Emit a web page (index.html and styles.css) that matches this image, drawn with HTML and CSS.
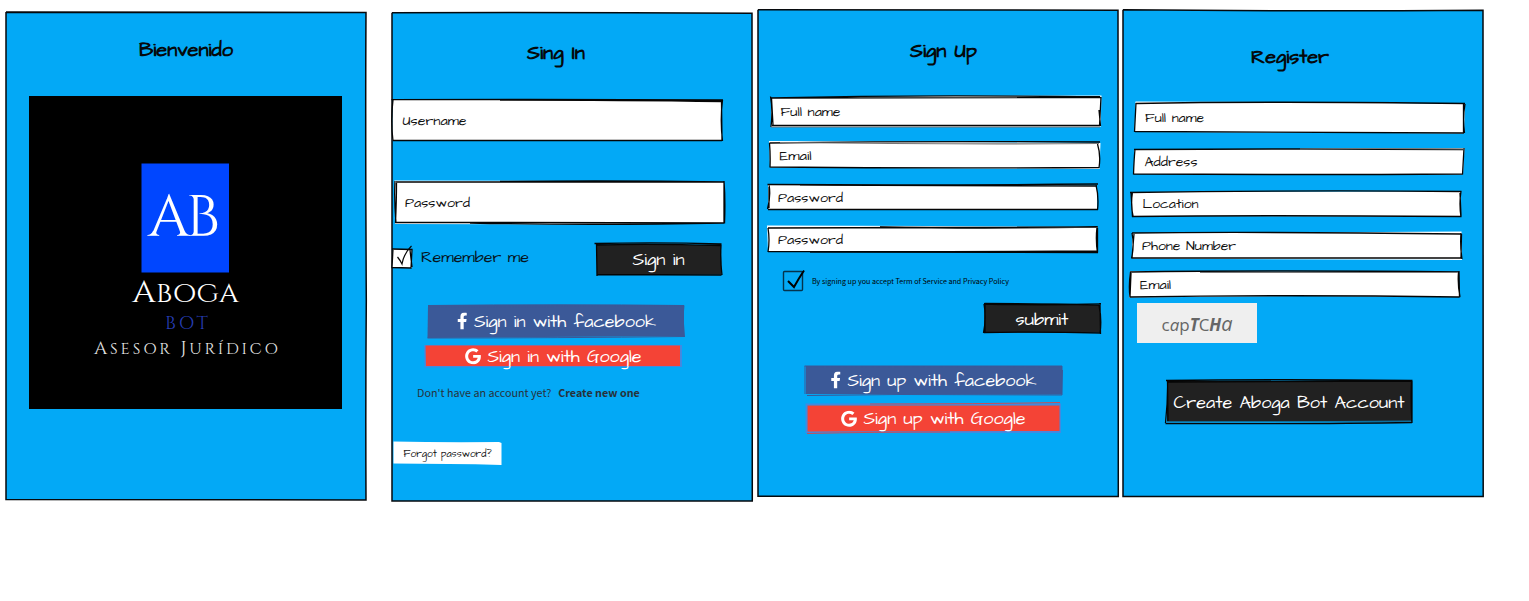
FILE: index.html
```html
<!DOCTYPE html>
<html lang="es">
<head>
<meta charset="utf-8">
<title>Aboga Bot</title>
<link rel="stylesheet" href="styles.css">
</head>
<body>
<svg class="defs" width="0" height="0" aria-hidden="true">
  <symbol id="facebook" viewBox="0 0 320 512"><path d="M279 288l14-93h-89v-60c0-25 12-50 52-50h41V6S260 0 225 0c-73 0-121 44-121 125v70H23v93h81v224h100V288z"/></symbol>
  <symbol id="google" viewBox="0 0 488 512"><path d="M488 261.8C488 403.3 391.1 504 248 504 110.8 504 0 393.2 0 256S110.8 8 248 8c66.8 0 123 24.500 166.3 64.900l-67.500 64.900C258.500 52.600 94.300 116.600 94.300 256c0 86.500 69.100 156.600 153.700 156.600 98.200 0 135-70.400 140.800-106.900H248v-85.300h236.100c2.300 12.700 3.900 24.900 3.900 41.400z"/></symbol>
</svg>
<main class="board">

  <section class="screen welcome">
    <svg class="frame" viewBox="5 11 362 490" width="362" height="490">
      <path class="sky" d="M6 12.500L366 12.500L366 500L6 500Z"/>
      <path class="edge" d="M6 12Q120 11.500 366 12.500M6 12.500Q180 13.200 366 12.500Q365.300 120 366.300 300Q365.500 400 366 500Q180 500.500 6 499.500Q6.600 200 6 12"/>
    </svg>
    <div class="content">
      <svg class="title" viewBox="134 38 104 24" width="104" height="24"><text x="139" y="55.500" textLength="94" lengthAdjust="spacingAndGlyphs">Bienvenido</text></svg>
      <svg class="logo" viewBox="29 96 313 313" width="313" height="313">
        <rect class="black" x="29" y="96" width="313" height="313"/>
        <rect class="mark" x="141.500" y="163.500" width="87.500" height="109"/>
        <text class="mono" x="148" y="236" textLength="68" lengthAdjust="spacingAndGlyphs">AB</text>
        <text class="brand" x="132" y="302" textLength="107" lengthAdjust="spacingAndGlyphs">A<tspan class="brand-small">BOGA</tspan></text>
        <text class="bot" x="165" y="329" textLength="43">BOT</text>
        <text class="tagline" x="94" y="354" textLength="184">A<tspan class="tagline-small">SESOR</tspan> J<tspan class="tagline-small">URÍDICO</tspan></text>
      </svg>
    </div>
  </section>

  <section class="screen sign-in">
    <svg class="frame" viewBox="391 12 362 490" width="362" height="490">
      <path class="sky" d="M392 13L752 13L752 501L392 501Z"/>
      <path class="edge" d="M392 12.800Q560 12.200 752 13.300Q751.400 300 752.300 501Q550 500.500 392 501Q392.600 240 392 12.800"/>
    </svg>
    <div class="content">
      <svg class="title" viewBox="520 40 72 30" width="72" height="30"><text x="527" y="59" textLength="58" lengthAdjust="spacingAndGlyphs">Sing In</text></svg>
      <svg class="username" viewBox="391 98 334 46" width="334" height="46">
        <path class="paper" d="M393 100H722V140.500H392.500Z"/>
        <path class="ink" d="M391.500 99.700Q560 99 723 100M500 100Q620 100 722 101.500M722.500 100Q720 120 722.500 141M721.500 102L722 141M393 140.500Q520 141 722 140.500M393 100Q390.500 120 393 141"/>
        <text class="label" x="402.500" y="124.500" textLength="64" lengthAdjust="spacingAndGlyphs">Username</text>
      </svg>
      <svg class="password" viewBox="393 179 334 46" width="334" height="46">
        <path class="paper" d="M394.500 180.500L560 181L724 182V223L560 224.500L395 224Z"/>
        <path class="ink" d="M396 182Q550 181.500 724.500 182M500 181.500Q610 180 724 182M724 181Q725.500 200 724.500 223.500M724 182V223M395 222.500Q560 222 724 223M470 223Q590 225.500 724 223M395 181Q394 200 396 223M396.500 183Q396.500 200 395.500 223"/>
        <text class="label" x="405" y="206.500" textLength="65" lengthAdjust="spacingAndGlyphs">Password</text>
      </svg>
      <div class="remember-row">
        <svg viewBox="391 242 144 36" width="144" height="36">
          <path class="paper" d="M393 249H412V268H392Z"/>
          <path class="ink" d="M392 249L412 249.500L411 268L392 267.500L393 249M410 250L412 267"/>
          <path class="ink thin" d="M397.500 257Q400 260 402 264Q404 253 411.500 246"/>
          <text class="remember" x="421" y="261.500" textLength="108" lengthAdjust="spacingAndGlyphs">Remember me</text>
        </svg>
        <svg viewBox="594 242 130 36" width="130" height="36">
          <path class="dark" d="M597 245L721 245L721.500 274.500L597 274.500Z"/>
          <path class="ink" d="M594.500 243.500Q660 242 721.500 244M596 245Q650 243.500 721 245.500Q720 260 722 275M596.500 244L597 276M597 274.500L721.500 275"/>
          <text class="button-text" x="632.500" y="265" textLength="52" lengthAdjust="spacingAndGlyphs">Sign in</text>
        </svg>
      </div>
      <svg class="facebook-in" viewBox="426 303 262 38" width="262" height="38">
        <path class="blue" d="M428 305H684V336L427.500 338Z"/>
        <path class="blue-line" d="M428 305.500Q560 304 684 305.500L683 317L684.500 337M430 307L684 306M427.500 338Q560 338 684 336.500"/>
        <use class="icon" href="#facebook" x="457" y="312.500" width="10.500" height="17"/>
        <text class="button-text" x="474" y="326.500" textLength="182" lengthAdjust="spacingAndGlyphs">Sign in with facebook</text>
      </svg>
      <svg class="google-in" viewBox="424 343 260 26" width="260" height="26">
        <path class="halo" d="M425 346H681V366L425.500 366.500Z"/>
        <path class="red" d="M425.500 345.500H680V366H426Z"/>
        <use class="icon" href="#google" x="465" y="348" width="16" height="16.500"/>
        <text class="button-text" x="487.500" y="361.500" textLength="154" lengthAdjust="spacingAndGlyphs">Sign in with Google</text>
      </svg>
      <p class="account"><span>Don't have an account yet?</span><b>Create new one</b></p>
      <svg class="forgot" viewBox="392 440 112 28" width="112" height="28">
        <path class="paper" d="M393.500 441.500Q440 442.500 499 442L501.500 443V465Q450 463.500 393.500 463.500Z"/>
        <text class="forgot-text" x="403.500" y="457" textLength="88" lengthAdjust="spacingAndGlyphs">Forgot password?</text>
      </svg>
    </div>
  </section>

  <section class="screen sign-up">
    <svg class="frame" viewBox="757 9 362 489" width="362" height="489">
      <path class="sky" d="M758 10H1118V496.500H758Z"/>
      <path class="edge" d="M758 9.800Q930 10.600 1118 10.200Q1117.500 260 1118.300 496.500Q940 497 758 496.300Q759 240 758 9.800"/>
    </svg>
    <div class="content">
      <svg class="title" viewBox="905 38 80 28" width="80" height="28"><text x="910" y="56.500" textLength="67" lengthAdjust="spacingAndGlyphs">Sign Up</text></svg>
      <svg class="name" viewBox="768 94 336 36" width="336" height="36">
        <path class="paper" d="M771 98L930 96L1101.500 95.500L1100.500 127L771 127Z"/>
        <path class="ink" d="M771 98Q920 94.500 1100 97M772 98Q930 97.500 1100.500 97.500M770.500 96.500Q773 110 771 127M771.500 98L773 125M1101 97L1099.500 126M1099 110L1100.500 126M772 125.500Q930 125.500 1100 125.500"/><path class="soft" d="M771 127Q900 127 1100 127"/>
        <text class="label" x="780.500" y="115.500" textLength="60" lengthAdjust="spacingAndGlyphs">Full name</text>
      </svg>
      <svg class="email" viewBox="768 140 336 30" width="336" height="30">
        <path class="paper" d="M769 141L900 141.500L1100.500 143L1099.500 169L770 167.500Z"/>
        <path class="ink" d="M769.500 143Q920 141 1100 142M769.500 143Q770.500 155 770 167.500M1097.500 144Q1101 155 1099 168M770 167Q930 168.500 1099 167.500"/><path class="soft" d="M780 142.500Q950 144.500 1099 143.500"/>
        <text class="label" x="779.500" y="159.500" textLength="32" lengthAdjust="spacingAndGlyphs">Email</text>
      </svg>
      <svg class="pass" viewBox="766 182 336 30" width="336" height="30">
        <path class="paper" d="M768 184.500L1097 185.500V209.500L768.500 209Z"/>
        <path class="ink" d="M767.500 184.500Q930 185.500 1098 184M800 185L1097 186M769 184Q771 197 767.500 209M769 187L769 208M1096 185Q1099 197 1097.500 210M768 209.500Q850 209 1098 209.500"/>
        <text class="label" x="778" y="201.500" textLength="65" lengthAdjust="spacingAndGlyphs">Password</text>
      </svg>
      <svg class="pass" viewBox="766 224 336 30" width="336" height="30">
        <path class="paper" d="M767 225.500L930 226L1098 227V252L768 252Z"/>
        <path class="ink" d="M768 228Q930 227 1098 227M880 227Q980 229 1097 227M768 228Q770 240 768 252M1097 227Q1095.500 240 1097.500 253M1097.500 228V252M768 251.500Q930 252 1098 251M810 252L1098 252.500"/>
        <text class="label" x="778" y="243.500" textLength="65" lengthAdjust="spacingAndGlyphs">Password</text>
      </svg>
      <div class="terms">
        <svg viewBox="782 268 24 26" width="24" height="26">
          <rect class="box" x="783.500" y="271.500" width="19" height="19" rx="1"/>
          <path class="tick" d="M788 281L794 287Q799 278 804 270.500"/>
        </svg>
        <span>By signing up you accept Term of Service and Privacy Policy</span>
      </div>
      <svg class="submit" viewBox="981 302 122 34" width="122" height="34">
        <path class="dark" d="M984.500 305L1100 305V332.500H984Z"/>
        <path class="ink" d="M984 304Q1040 305.500 1101 304M984.500 303.500Q1030 303.500 1100 305M984 304Q986.500 318 983.500 333M985 305V333M1100 303L1100.500 334M1099 305Q1102 320 1100 333M984 332.500Q1040 331.500 1101 333"/>
        <text class="button-text" x="1015.500" y="324.500" textLength="53" lengthAdjust="spacingAndGlyphs">submit</text>
      </svg>
      <svg class="facebook-up" viewBox="803 364 262 34" width="262" height="34">
        <path class="blue" d="M806 366H1062V394.500L806 394Z"/>
        <path class="blue-line" d="M804.500 366H1062V395M805 366V394M807 395.500L900 394.500L1062 395M1062.500 370L1061.500 394M808 367.500L1060 367"/>
        <use class="icon" href="#facebook" x="830.500" y="371.500" width="10.500" height="17"/>
        <text class="button-text" x="847.500" y="385.500" textLength="189" lengthAdjust="spacingAndGlyphs">Sign up with facebook</text>
      </svg>
      <svg class="google-up" viewBox="804 401 262 34" width="262" height="34">
        <path class="halo" d="M806.500 404.500H1060V432H806.500Z"/>
        <path class="red" d="M807.500 405.500H1059.500V431L807.500 431.500Z"/>
        <path class="red-line" d="M870 404Q980 404 1060 402.500M807 433.500Q870 432 950 432"/>
        <use class="icon" href="#google" x="841" y="410.500" width="16" height="16.500"/>
        <text class="button-text" x="863.500" y="423.500" textLength="162" lengthAdjust="spacingAndGlyphs">Sign up with Google</text>
      </svg>
    </div>
  </section>

  <section class="screen register">
    <svg class="frame" viewBox="1122 9 362 489" width="362" height="489">
      <path class="sky" d="M1123 10H1483V496.500H1123Z"/>
      <path class="edge" d="M1123 9.800Q1290 11.500 1483 10.200Q1482.300 260 1483.200 496.500Q1300 496 1123 496.500Q1123.800 240 1123 9.800"/>
    </svg>
    <div class="content">
      <svg class="title" viewBox="1245 44 90 30" width="90" height="30"><text x="1251" y="62.500" textLength="78" lengthAdjust="spacingAndGlyphs">Register</text></svg>
      <svg class="name" viewBox="1132 100 336 36" width="336" height="36">
        <path class="paper" d="M1135.500 101.500L1300 102L1465 104L1464 133.500L1300 132.500L1134.500 132Z"/>
        <path class="ink" d="M1136 103.500Q1270 101 1465 103.500M1136 103L1134.500 132M1465 104Q1462.500 118 1464.500 133M1463.500 104V133M1135 131.500Q1300 132 1464 133"/>
        <text class="label" x="1145" y="121.500" textLength="59" lengthAdjust="spacingAndGlyphs">Full name</text>
      </svg>
      <svg class="address" viewBox="1132 146 336 32" width="336" height="32">
        <path class="paper" d="M1134 149.500L1300 149L1464.500 148L1463 174.500L1134 174Z"/>
        <path class="ink" d="M1134 149.500Q1300 148.500 1463 149.500M1135 149Q1134 160 1133.500 174.500M1464 148L1462.500 174.500M1133.500 174Q1300 175 1463 174"/><path class="soft" d="M1300 149Q1380 148 1463 149"/>
        <text class="label" x="1144.500" y="165.500" textLength="53" lengthAdjust="spacingAndGlyphs">Address</text>
      </svg>
      <svg class="location" viewBox="1129 188 336 32" width="336" height="32">
        <path class="paper" d="M1132 192L1461 191.500L1460.500 216.500L1132 216Z"/>
        <path class="ink" d="M1130 192.500Q1300 190 1461.500 191.500M1131 192L1132.500 217M1132.500 192Q1130.500 205 1133 216M1461 191Q1459 204 1461 217M1460 193L1461 216M1132 216.500Q1250 215 1461.500 216.500"/>
        <text class="label" x="1142.500" y="207.500" textLength="56" lengthAdjust="spacingAndGlyphs">Location</text>
      </svg>
      <svg class="location" viewBox="1129 230 336 32" width="336" height="32">
        <path class="paper" d="M1132 233L1300 232.500L1461.500 231.500L1462 260L1132 258.500Z"/>
        <path class="ink" d="M1132 233Q1250 231.500 1461 234M1132 233Q1134.500 246 1131.500 258.500M1134 234L1132 258M1461 233Q1460 246 1462 259M1461.500 234L1461 258M1132 258Q1300 258.500 1462 258"/>
        <text class="label" x="1142" y="249.500" textLength="94" lengthAdjust="spacingAndGlyphs">Phone Number</text>
      </svg>
      <svg class="reg-email" viewBox="1127 269 336 30" width="336" height="30">
        <path class="paper" d="M1130 271L1300 271.500L1459 272V297L1300 296L1129 297.500Z"/>
        <path class="ink" d="M1130 272Q1280 270 1459 272M1130.500 272Q1128.500 285 1130 297.500M1131 273L1130 297M1459 271L1459.500 297.500M1458.500 272Q1457.500 285 1460 297M1130 297Q1290 294.500 1459 297"/><path class="soft" d="M1200 272.500Q1320 273 1458 272.500"/>
        <text class="label" x="1140" y="288.500" textLength="31" lengthAdjust="spacingAndGlyphs">Email</text>
      </svg>
      <svg class="captcha" viewBox="1137 303 120 40" width="120" height="40">
        <rect class="captcha-bg" x="1137" y="303" width="120" height="40"/>
        <text class="captcha-text" x="1161.500" y="331" textLength="71" lengthAdjust="spacingAndGlyphs">c<tspan class="slant">a</tspan>p<tspan class="slant heavy">T</tspan>C<tspan class="slant heavy">H</tspan><tspan class="slant large">a</tspan></text>
      </svg>
      <svg class="create" viewBox="1163 377 252 48" width="252" height="48">
        <path class="dark" d="M1167 381H1412V421.500H1167Z"/>
        <path class="ink" d="M1166 380.500Q1280 379 1412.500 380.500M1167 382L1411 381M1167.500 380Q1168 400 1165.500 423M1167.500 381L1168 421M1411.500 380Q1410.500 400 1412 423M1412 381V422M1165.500 423.500Q1320 424 1412 422.500"/>
        <path class="glint" d="M1166 422.300Q1290 422 1411 421"/>
        <text class="button-text" x="1173.500" y="407.500" textLength="231" lengthAdjust="spacingAndGlyphs">Create Aboga Bot Account</text>
      </svg>
    </div>
  </section>

</main>
</body>
</html>
```
FILE: styles.css
```css
body {
  margin: 0;
  background: #fff;
  font-family: "Architects Daughter", Lato, sans-serif;
}
svg { display: block; overflow: visible; flex: none; }
.defs { position: absolute; }
.board { display: flex; align-items: flex-start; padding-left: 5px; }

.screen { display: grid; flex: none; width: 362px; }
.screen > * { grid-area: 1 / 1; }
.content { display: flex; flex-direction: column; align-items: flex-start; }
.welcome { margin-top: 11px; }
.sign-in { margin: 12px 0 0 24px; }
.sign-up { margin: 9px 0 0 4px; }
.register { margin: 9px 0 0 3px; }

/* Sketch strokes and fills */
.sky { fill: #03a9f6; }
.edge { fill: none; stroke: #06090c; stroke-width: 1.5; }
.paper { fill: #fff; }
.ink { fill: none; stroke: #050505; stroke-width: 1.3; }
.thin { stroke-width: 1.2; }
.soft { fill: none; stroke: #777; stroke-width: 1.2; }
.dark { fill: #212121; }
.blue { fill: #3b5998; }
.blue-line { fill: none; stroke: #3b5998; stroke-width: 1; }
.red { fill: #f44336; }
.red-line { fill: none; stroke: #c84d57; stroke-width: 1; }
.halo { fill: none; stroke: #4389e0; stroke-width: 2; }
.glint { fill: none; stroke: #0a78ae; stroke-width: 0.9; }
.icon { fill: #fff; }

/* Lettering */
.title text { font-size: 20px; font-weight: 700; fill: #05090c; }
.label { font-size: 14px; fill: #111; }
.remember { font-size: 16px; fill: #06141c; }
.button-text { font-size: 18px; fill: #fff; }
.forgot-text { font-size: 10.5px; fill: #111; }

/* Welcome */
.welcome .title { margin: 27px 0 0 129px; }
.logo { margin: 34px 0 0 24px; font-family: Cinzel, "Liberation Serif", serif; }
.black { fill: #000; }
.mark { fill: #0046ff; }
.mono { font-size: 59px; letter-spacing: -4px; fill: #fff; }
.brand { font-size: 30px; fill: #fff; }
.brand-small { font-size: 25.5px; }
.bot { font-size: 18.5px; fill: #263db4; }
.tagline { font-size: 18.5px; fill: #e6e6e6; }
.tagline-small { font-size: 16px; }

/* Sign in */
.sign-in .title { margin: 28px 0 0 129px; }
.username { margin-top: 28px; }
.password { margin: 35px 0 0 2px; }
.remember-row { display: flex; gap: 59px; margin-top: 17px; }
.facebook-in { margin: 25px 0 0 35px; }
.google-in { margin: 2px 0 0 33px; }
.account {
  display: flex;
  gap: 7px;
  margin: 16px 0 0 26px;
  height: 16px;
  font: 10.75px/16px "Noto Sans CJK SC", sans-serif;
  color: #27323a;
  white-space: nowrap;
}
.forgot { margin: 39px 0 0 1px; }

/* Sign up */
.sign-up .title { margin: 29px 0 0 148px; }
.sign-up .name { margin: 28px 0 0 11px; }
.email { margin: 10px 0 0 11px; }
.pass { margin: 12px 0 0 9px; }
.terms {
  display: flex;
  align-items: center;
  gap: 6px;
  height: 26px;
  margin: 14px 0 0 25px;
  font: 400 7.17px/12px "Noto Sans CJK SC", sans-serif;
  color: #000;
  white-space: nowrap;
}
.box { fill: none; stroke: #05334c; stroke-width: 1.4; }
.tick { fill: none; stroke: #000; stroke-width: 2; }
.submit { margin: 8px 0 0 224px; }
.facebook-up { margin: 28px 0 0 46px; }
.google-up { margin: 3px 0 0 47px; }

/* Register */
.register .title { margin: 35px 0 0 123px; }
.register .name { margin: 26px 0 0 10px; }
.address { margin: 10px 0 0 10px; }
.location { margin: 10px 0 0 7px; }
.reg-email { margin: 7px 0 0 5px; }
.captcha { margin: 4px 0 0 15px; }
.captcha-bg { fill: #efefef; }
.captcha-text { font: 17px "Open Sans", sans-serif; fill: #666; }
.slant { font-style: italic; }
.heavy { font-weight: 700; }
.large { font-size: 20px; }
.create { margin: 34px 0 0 41px; }
```
